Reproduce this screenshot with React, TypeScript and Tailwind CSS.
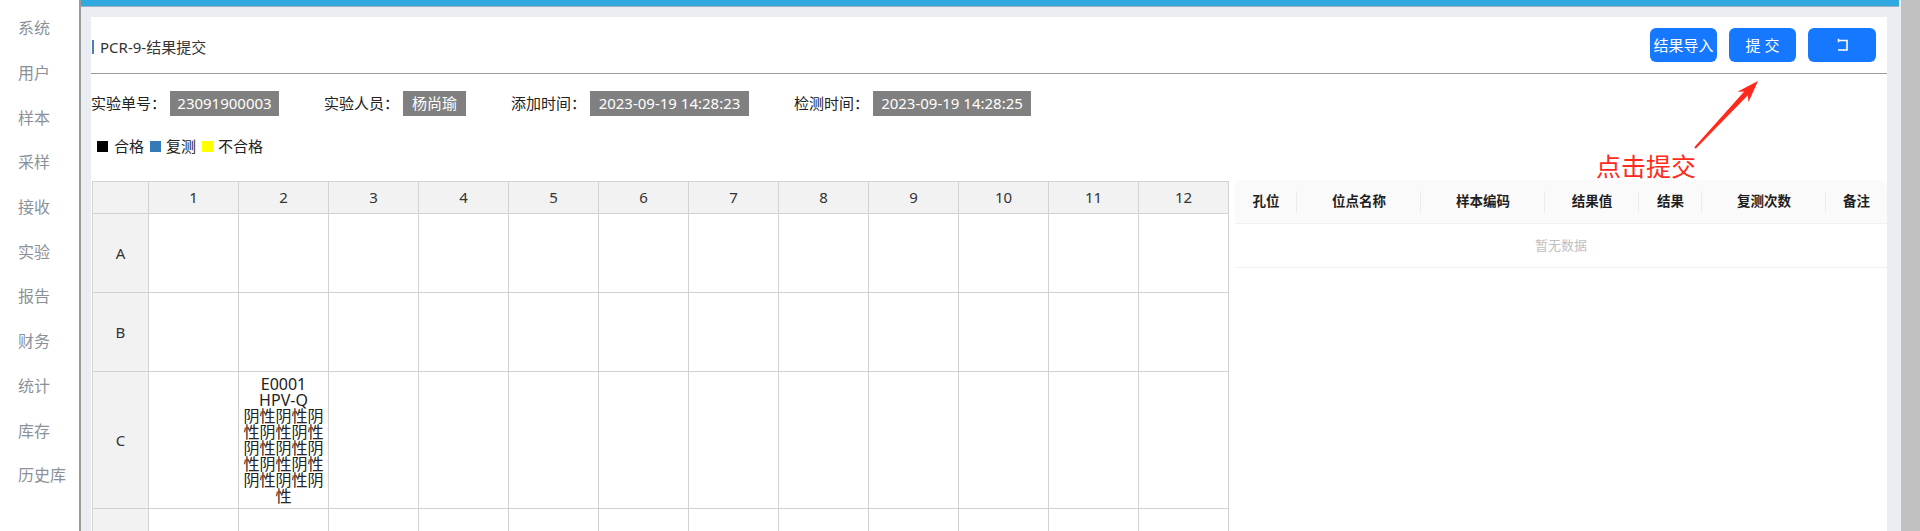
import React from "react";

const menu = ["系统", "用户", "样本", "采样", "接收", "实验", "报告", "财务", "统计", "库存", "历史库"];
const cols = [1, 2, 3, 4, 5, 6, 7, 8, 9, 10, 11, 12];

const info = [
  { label: "实验单号：", value: "23091900003", w: "w-[109px]" },
  { label: "实验人员：", value: "杨尚瑜", w: "w-[63px]" },
  { label: "添加时间：", value: "2023-09-19 14:28:23", w: "w-[159px]" },
  { label: "检测时间：", value: "2023-09-19 14:28:25", w: "w-[158px]" },
];

const resultCols = ["孔位", "位点名称", "样本编码", "结果值", "结果", "复测次数", "备注"];

function Sidebar() {
  return (
    <aside className="w-[79px] shrink-0 bg-white pt-[6px]">
      {menu.map((m) => (
        <div key={m} className="flex h-[44.7px] items-center pl-[18px] text-[16px] text-[#8b9199]">
          {m}
        </div>
      ))}
    </aside>
  );
}

function ReturnIcon() {
  return (
    <svg width="14" height="14" viewBox="0 0 14 14" fill="none" stroke="white" strokeWidth="1.6">
      <path d="M3.5 2.5 H12 V12 H3" />
      <path d="M3.5 0.8 V4.2" />
    </svg>
  );
}

function Header() {
  return (
    <div className="flex h-[57px] items-center justify-between border-b border-[#9a9a9a]">
      <div className="flex items-center pl-[1px] pt-[4px]">
        <span className="h-[14px] w-[2px] bg-[#4a7fb8]" />
        <span className="ml-[6px] text-[15px] leading-[20px] text-[#333]">PCR-9-结果提交</span>
      </div>
      <div className="flex items-center gap-[12px] pr-[11px]">
        <button className="h-[34px] w-[67px] rounded-[6px] bg-[#1677ff] text-[15px] text-white">结果导入</button>
        <button className="h-[34px] w-[67px] rounded-[6px] bg-[#1677ff] text-[15px] text-white">提 交</button>
        <button className="flex h-[34px] w-[68px] items-center justify-center rounded-[6px] bg-[#1677ff]">
          <ReturnIcon />
        </button>
      </div>
    </div>
  );
}

function InfoRow() {
  return (
    <div className="mt-[17px] flex h-[25px] items-center text-[15px] text-[#222]">
      {info.map((it, i) => (
        <div key={it.label} className={i < info.length - 1 ? "mr-[45px] flex items-center" : "flex items-center"}>
          <span className="w-[79px] whitespace-nowrap">{it.label}</span>
          <span className={`${it.w} flex h-[25px] items-center justify-center bg-[#808080] text-white`}>{it.value}</span>
        </div>
      ))}
    </div>
  );
}

function Legend() {
  return (
    <div className="mt-[20px] flex h-[20px] items-center pl-[6px] text-[15px] text-[#222]">
      <span className="h-[11px] w-[11px] bg-black" />
      <span className="ml-[6px]">合格</span>
      <span className="ml-[6px] h-[11px] w-[11px] bg-[#337ab7]" />
      <span className="ml-[5px]">复测</span>
      <span className="ml-[6px] h-[11px] w-[11px] bg-[#ffff00]" />
      <span className="ml-[5px]">不合格</span>
    </div>
  );
}

function PlateTable() {
  const rows = [
    { k: "A", h: "h-[79px]" },
    { k: "B", h: "h-[79px]" },
    { k: "C", h: "h-[137px]" },
    { k: "D", h: "h-[79px]" },
  ];
  return (
    <div className="ml-[1px] grid w-[1137px] shrink-0 grid-cols-[56px_repeat(12,90px)] border-l border-t border-[#d2d2d2] text-[15px] text-[#333]">
      <div className="h-[32px] border-b border-r border-[#d2d2d2] bg-[#f2f2f2]" />
      {cols.map((c) => (
        <div key={c} className="flex h-[32px] items-center justify-center border-b border-r border-[#d2d2d2] bg-[#f2f2f2]">
          {c}
        </div>
      ))}
      {rows.map((r) => (
        <React.Fragment key={r.k}>
          <div className={`${r.h} flex items-center justify-center border-b border-r border-[#d2d2d2] bg-[#f2f2f2]`}>
            {r.k === "D" ? "" : r.k}
          </div>
          {cols.map((c) => (
            <div key={c} className={`${r.h} flex items-center justify-center border-b border-r border-[#d2d2d2] bg-white`}>
              {r.k === "C" && c === 2 ? (
                <div className="px-[4px] text-center text-[16px] leading-[16px] text-[#222]">
                  <div>E0001</div>
                  <div>HPV-Q</div>
                  <div>{"阴性".repeat(13)}</div>
                </div>
              ) : null}
            </div>
          ))}
        </React.Fragment>
      ))}
    </div>
  );
}

function ResultTable() {
  return (
    <div className="-mt-px ml-[6px] flex-1">
      <div className="grid h-[44px] grid-cols-[62px_124px_124px_94px_63px_124px_1fr] rounded-t-[8px] border-b border-[#f0f0f0] bg-[#fafafa] text-[13.5px] font-semibold text-[#1f1f1f]">
        {resultCols.map((c, i) => (
          <div
            key={c}
            className={
              i < resultCols.length - 1
                ? "relative flex items-center justify-center before:absolute before:right-0 before:top-1/2 before:h-[22px] before:w-px before:-translate-y-1/2 before:bg-[#ececec]"
                : "relative flex items-center justify-center"
            }
          >
            {c}
          </div>
        ))}
      </div>
      <div className="flex h-[44px] items-center justify-center border-b border-[#f0f0f0] text-[13px] text-[#c0c0c0]">
        暂无数据
      </div>
    </div>
  );
}

function Annotation() {
  return (
    <>
      <svg className="absolute left-[1690px] top-[76px]" width="75" height="78" viewBox="0 0 75 78">
        <polygon
          points="4.3,71.3 54.2,15.4 47.4,15.8 68,5 58.4,26.2 57.9,19.2 5.7,72.7"
          fill="#ff2a1c"
        />
      </svg>
      <span className="absolute left-[1596px] top-[151px] text-[25px] leading-[30px] text-[#ff2a1c]">点击提交</span>
    </>
  );
}

export default function App() {
  return (
    <div className="relative flex h-[531px] w-[1920px] overflow-hidden bg-white [font-family:'Noto_Sans','Noto_Sans_CJK_SC',sans-serif]">
      <Sidebar />
      <div className="w-[2px] shrink-0 bg-[#9b9b9b]" />
      <main className="flex w-[1820px] shrink-0 flex-col bg-[#eaeef3]">
        <div className="mr-[2px] h-[7px] shrink-0 border-b border-[#9fb0bf] bg-[#2fa9e0]" />
        <div className="flex-1 pl-[10px] pr-[14px] pt-[10px]">
          <section className="h-full bg-white">
            <Header />
            <InfoRow />
            <Legend />
            <div className="mt-[25px] flex items-start">
              <PlateTable />
              <ResultTable />
            </div>
          </section>
        </div>
      </main>
      <div className="w-[19px] shrink-0 bg-[#c1c1c1]" />
      <Annotation />
    </div>
  );
}
